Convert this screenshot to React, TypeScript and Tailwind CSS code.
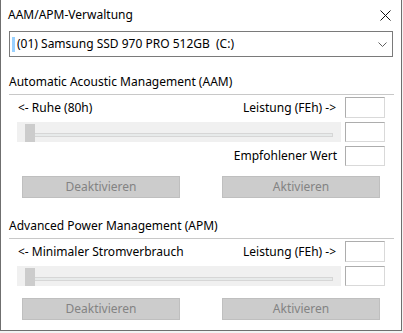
import React from 'react';

const FONT = { fontFamily: '"Noto Sans", "Liberation Sans", sans-serif' };

const ValueBox = ({ h = 'h-[21px]' }: { h?: string }) => (
  <div className={`w-[40px] ${h} border border-[#adadad] border-r-[#d9d9d9] border-b-[#d9d9d9] bg-white shrink-0`} />
);

const Slider = () => (
  <div className="relative ml-[8px] w-[324px] h-[20px] bg-[#f0f0f0] shrink-0">
    <div className="absolute left-[8px] right-[8px] top-[11px] h-[4px] border border-[#d6d6d6] bg-[#e7eaea]" />
    <div className="absolute left-[8px] top-[2px] w-[10px] h-[18px] bg-[#cccccc]" />
  </div>
);

const DisabledButton = ({ label }: { label: string }) => (
  <div className="w-[158px] h-[22px] border border-[#bfbfbf] bg-[#cccccc] flex items-center justify-center text-[12px] text-[#838383]">
    {label}
  </div>
);

const Section = ({ title, left, recommended }: { title: string; left: string; recommended?: boolean }) => (
  <div className="flex flex-col">
    <div className="h-[16px] leading-[16px] text-[12px] text-black">{title}</div>
    <div className="mt-[4px] h-px bg-[#c8c8c8] mr-[-1px]" />
    {/* row 1 */}
    <div className="mt-[2px] flex items-center h-[21px]">
      <span className="pl-[9px] flex-1 text-[12px]">{left}</span>
      <span className="text-[12px]">Leistung (FEh) -&gt;</span>
      <div className="ml-[9px] mr-[8px]">
        <ValueBox />
      </div>
    </div>
    {/* row 2 */}
    <div className="mt-[4px] flex items-center h-[20px]">
      <Slider />
      <div className="ml-[4px]">
        <ValueBox h="h-[20px]" />
      </div>
    </div>
    {recommended && (
      <div className="mt-[4px] flex items-center justify-end h-[20px] pr-[8px]">
        <span className="text-[12px] mr-[8px]">Empfohlener Wert</span>
        <ValueBox h="h-[20px]" />
      </div>
    )}
    <div className={`${recommended ? 'mt-[10px]' : 'mt-[12px]'} flex pl-[13px] gap-[42px]`}>
      <DisabledButton label="Deaktivieren" />
      <DisabledButton label="Aktivieren" />
    </div>
  </div>
);

export default function App() {
  return (
    <div className="w-[403px] h-[333px] bg-[#f3f3f3] overflow-hidden" style={FONT}>
      <div className="w-[402px] h-[331px] bg-white border-l border-r border-b border-[#6f6f6f] flex flex-col px-[8px] text-black">
        {/* title bar */}
        <div className="h-[29px] flex items-center justify-between">
          <span className="text-[12px] -ml-[1px]">AAM/APM-Verwaltung</span>
          <svg width="11" height="11" viewBox="0 0 11 11" className="mr-[2px] mt-[1px]">
            <path d="M0.5 0.5 L10.5 10.5 M10.5 0.5 L0.5 10.5" stroke="#111" strokeWidth="1" fill="none" />
          </svg>
        </div>

        {/* drive selector */}
        <div className="mt-[2px] h-[26px] border border-[#7a7a7a] flex items-center pl-[2px] pr-[5px]">
          <div className="w-[3px] h-[15px] bg-[#99d1ff]" />
          <span className="ml-[2px] text-[12px] whitespace-pre flex-1">(01) Samsung SSD 970 PRO 512GB  (C:)</span>
          <svg width="9" height="5" viewBox="0 0 9 5">
            <path d="M0.5 0.5 L4.5 4.5 L8.5 0.5" stroke="#606060" strokeWidth="1" fill="none" />
          </svg>
        </div>

        <div className="mt-[17px]">
          <Section title="Automatic Acoustic Management (AAM)" left="<- Ruhe (80h)" recommended />
        </div>

        <div className="mt-[20px]">
          <Section title="Advanced Power Management (APM)" left="<- Minimaler Stromverbrauch" />
        </div>
      </div>
    </div>
  );
}
